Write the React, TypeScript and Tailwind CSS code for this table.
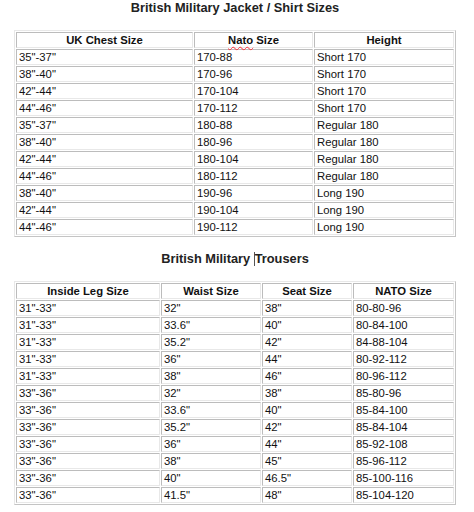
const jacketRows: Array<[string, string, string]> = [
  ['35"-37"', "170-88", "Short 170"],
  ['38"-40"', "170-96", "Short 170"],
  ['42"-44"', "170-104", "Short 170"],
  ['44"-46"', "170-112", "Short 170"],
  ['35"-37"', "180-88", "Regular 180"],
  ['38"-40"', "180-96", "Regular 180"],
  ['42"-44"', "180-104", "Regular 180"],
  ['44"-46"', "180-112", "Regular 180"],
  ['38"-40"', "190-96", "Long 190"],
  ['42"-44"', "190-104", "Long 190"],
  ['44"-46"', "190-112", "Long 190"]
];

const trouserRows: Array<[string, string, string, string]> = [
  ['31"-33"', '32"', '38"', "80-80-96"],
  ['31"-33"', '33.6"', '40"', "80-84-100"],
  ['31"-33"', '35.2"', '42"', "84-88-104"],
  ['31"-33"', '36"', '44"', "80-92-112"],
  ['31"-33"', '38"', '46"', "80-96-112"],
  ['33"-36"', '32"', '38"', "85-80-96"],
  ['33"-36"', '33.6"', '40"', "85-84-100"],
  ['33"-36"', '35.2"', '42"', "85-84-104"],
  ['33"-36"', '36"', '44"', "85-92-108"],
  ['33"-36"', '38"', '45"', "85-96-112"],
  ['33"-36"', '40"', '46.5"', "85-100-116"],
  ['33"-36"', '41.5"', '48"', "85-104-120"]
];

const cell =
  "h-[16px] border border-t-[#bcbcbc] border-l-[#bcbcbc] border-r-[#e8e8e8] border-b-[#e8e8e8] px-[2px] py-0 text-left align-middle leading-[13px] whitespace-nowrap";
const head =
  "h-[16px] border border-t-[#bcbcbc] border-l-[#bcbcbc] border-r-[#e8e8e8] border-b-[#e8e8e8] px-[2px] py-0 text-center align-middle font-bold leading-[13px]";

export default function App() {
  return (
    <div className="h-[512px] w-[474px] overflow-hidden bg-white font-['Liberation_Sans',Arial,sans-serif] text-[11.3px] text-[#111]">
      <h2 className="ml-[14px] h-[30px] w-[442px] text-center text-[12.8px] font-bold leading-[15px] text-[#222]">
        British Military Jacket / Shirt Sizes
      </h2>

      <table className="ml-[14px] w-[442px] table-fixed border-separate border-spacing-[1px] border border-t-[#e8e8e8] border-l-[#e8e8e8] border-r-[#c4c4c4] border-b-[#c4c4c4]">
        <colgroup>
          <col className="w-[177px]" />
          <col className="w-[119px]" />
          <col />
        </colgroup>
        <thead>
          <tr>
            <th className={head}>UK Chest Size</th>
            <th className={head}>
              <span className="underline decoration-red-500 decoration-wavy decoration-1 underline-offset-2">Nato</span> Size
            </th>
            <th className={head}>Height</th>
          </tr>
        </thead>
        <tbody>
          {jacketRows.map((row, i) => (
            <tr key={i}>
              {row.map((value, j) => (
                <td key={j} className={cell}>
                  {value}
                </td>
              ))}
            </tr>
          ))}
        </tbody>
      </table>

      <h2 className="ml-[14px] mt-[14px] h-[30px] w-[442px] text-center text-[12.8px] font-bold leading-[15px] text-[#222]">
        British Military <span className="inline-block h-[14px] w-px bg-[#555] align-[-3px]" />Trousers
      </h2>

      <table className="ml-[14px] w-[442px] table-fixed border-separate border-spacing-[1px] border border-t-[#e8e8e8] border-l-[#e8e8e8] border-r-[#c4c4c4] border-b-[#c4c4c4]">
        <colgroup>
          <col className="w-[144px]" />
          <col className="w-[100px]" />
          <col className="w-[90px]" />
          <col />
        </colgroup>
        <thead>
          <tr>
            <th className={head}>Inside Leg Size</th>
            <th className={head}>Waist Size</th>
            <th className={head}>Seat Size</th>
            <th className={head}>NATO Size</th>
          </tr>
        </thead>
        <tbody>
          {trouserRows.map((row, i) => (
            <tr key={i}>
              {row.map((value, j) => (
                <td key={j} className={cell}>
                  {value}
                </td>
              ))}
            </tr>
          ))}
        </tbody>
      </table>
    </div>
  );
}
